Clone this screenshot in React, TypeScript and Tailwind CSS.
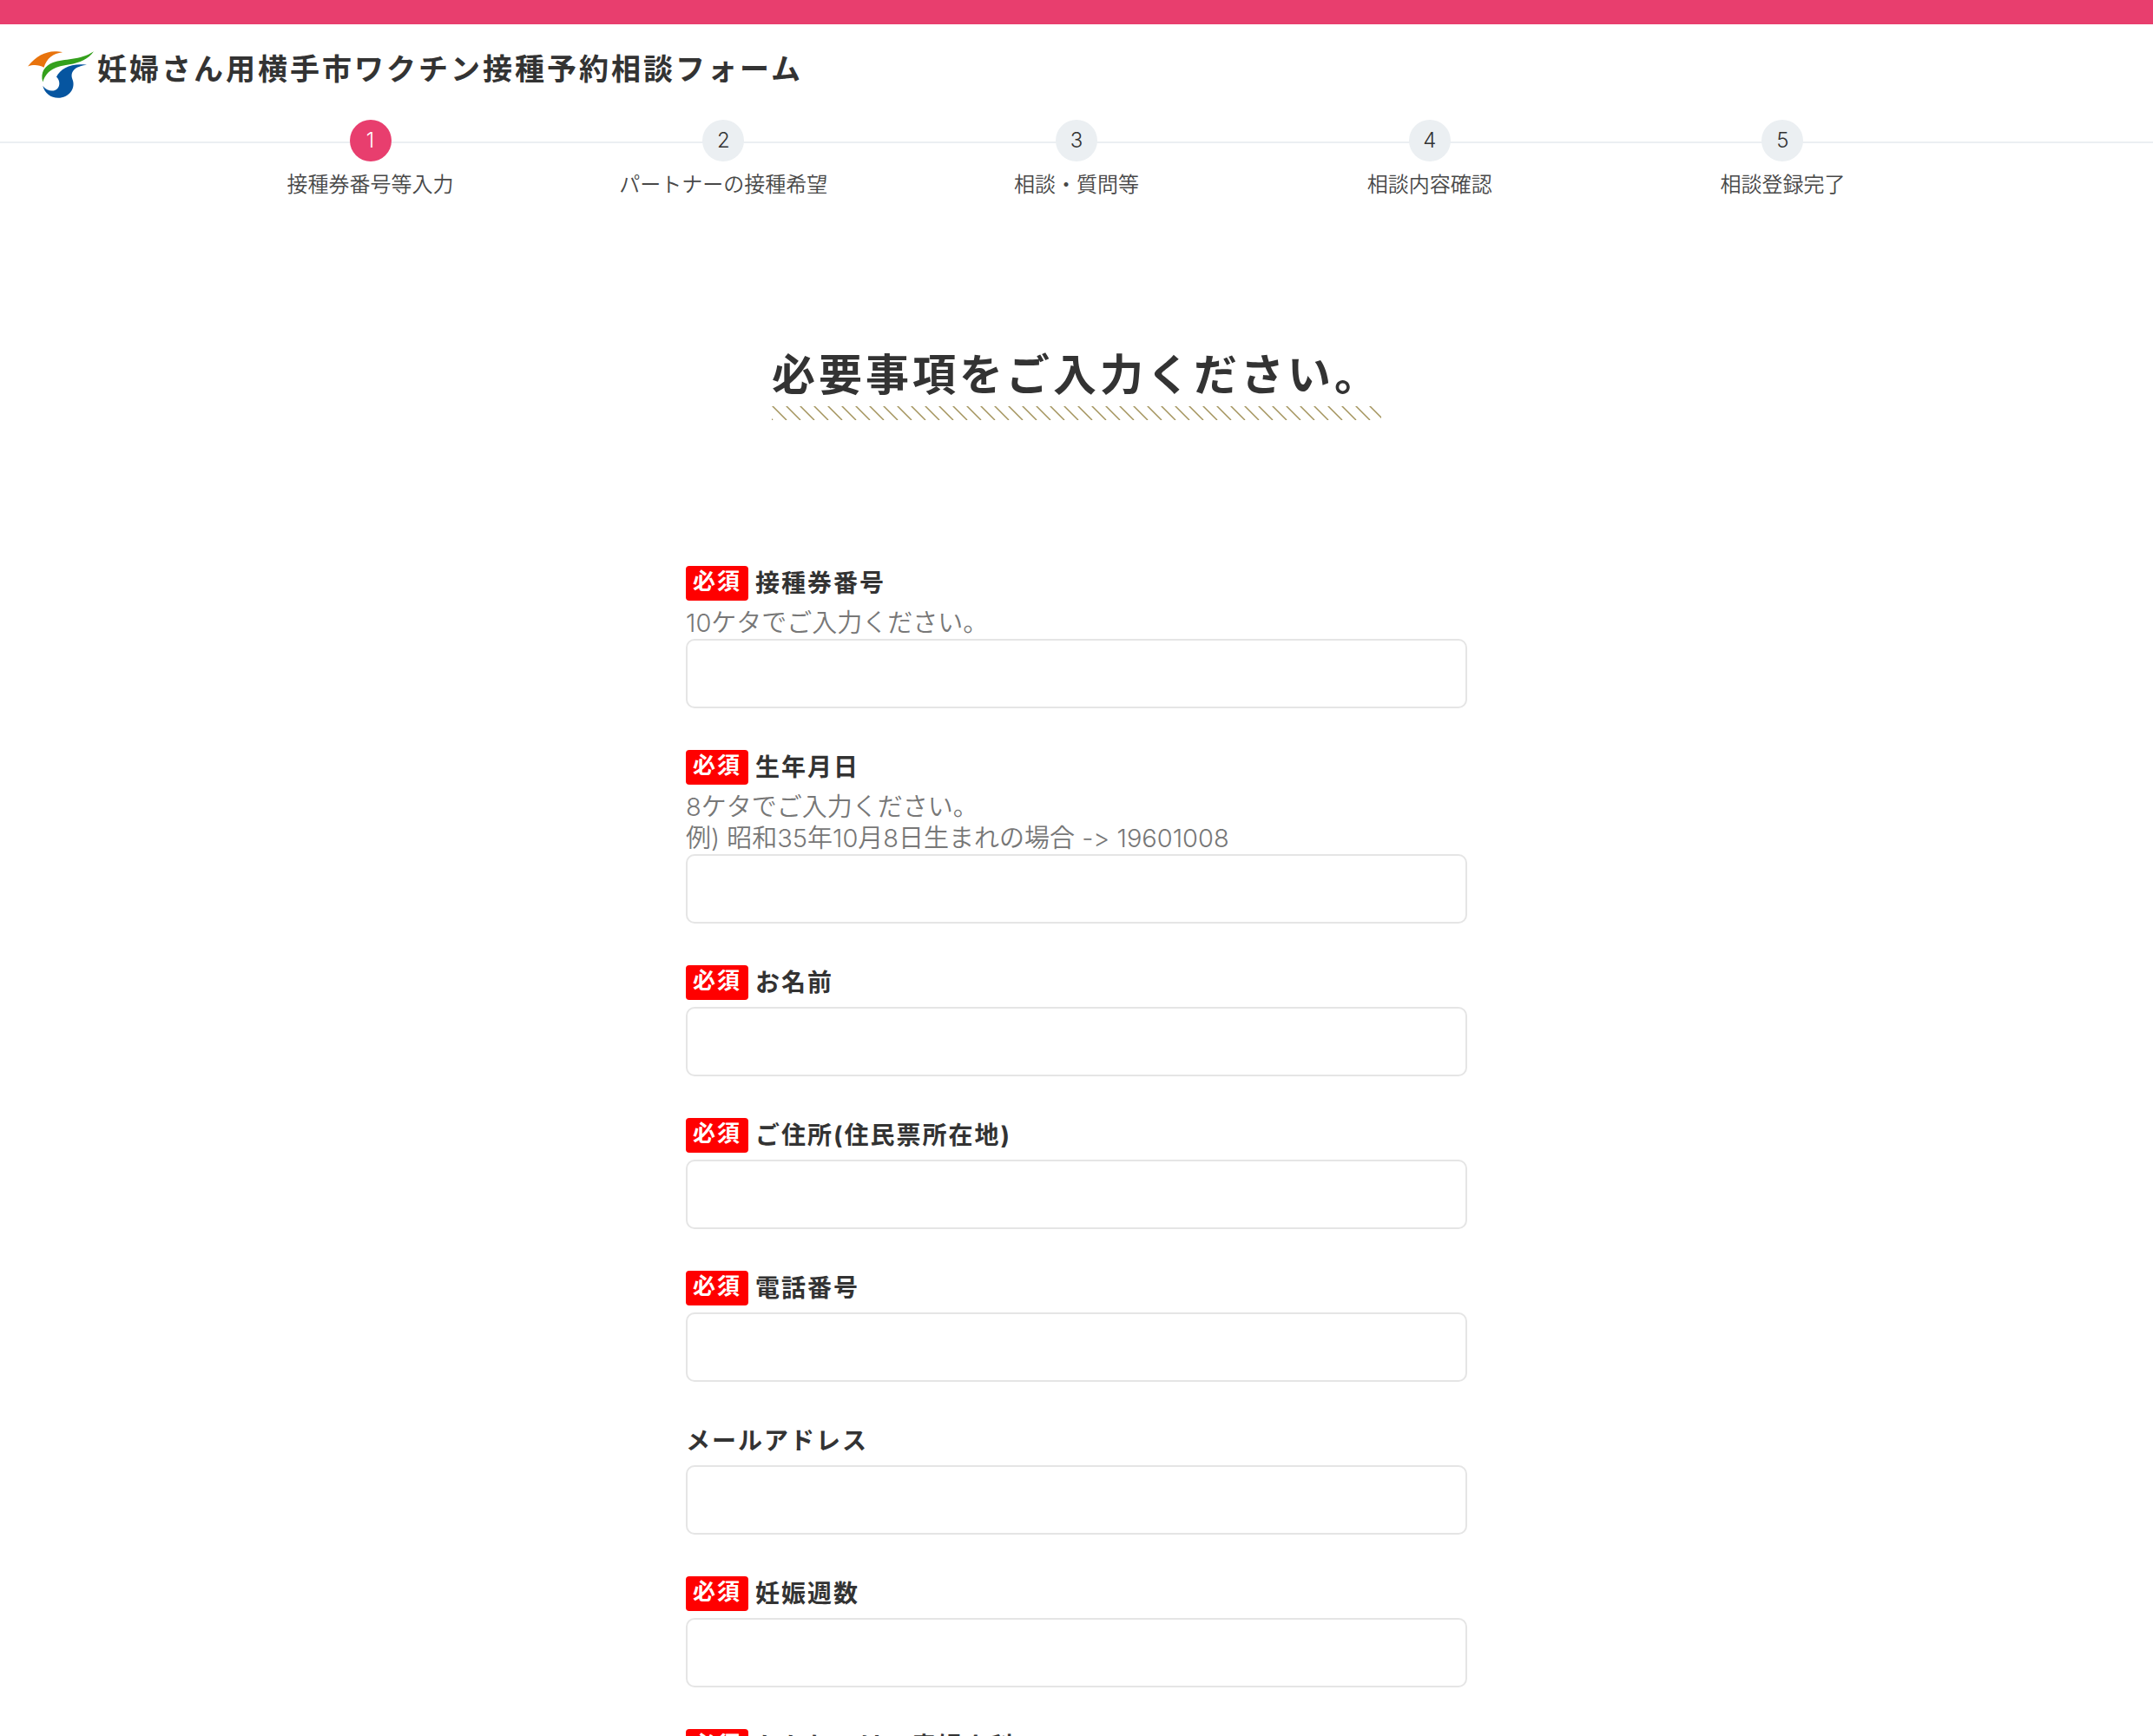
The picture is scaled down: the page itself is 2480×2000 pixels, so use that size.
import React from 'react';

interface Field {
    id: string;
    label: string;
    type: string;
    required: boolean;
    hints: string[];
}

const steps = ['接種券番号等入力', 'パートナーの接種希望', '相談・質問等', '相談内容確認', '相談登録完了'];

const fields: Field[] = [
    { id: 'ticket', label: '接種券番号', type: 'text', required: true, hints: ['10ケタでご入力ください。'] },
    { id: 'birthday', label: '生年月日', type: 'text', required: true, hints: ['8ケタでご入力ください。', '例) 昭和35年10月8日生まれの場合 -> 19601008'] },
    { id: 'name', label: 'お名前', type: 'text', required: true, hints: [] },
    { id: 'address', label: 'ご住所(住民票所在地)', type: 'text', required: true, hints: [] },
    { id: 'tel', label: '電話番号', type: 'tel', required: true, hints: [] },
    { id: 'email', label: 'メールアドレス', type: 'email', required: false, hints: [] },
    { id: 'weeks', label: '妊娠週数', type: 'text', required: true, hints: [] },
    { id: 'clinic', label: 'かかりつけの産婦人科', type: 'text', required: true, hints: [] },
];

const Logo: React.FC = () => (
    <svg viewBox="0 0 76 54" className="w-[76px] h-[54px] shrink-0" aria-hidden="true">
        <path fill="#e8730c" d="M0 17.500C9 6 20 .5 31 .3c3.500 0 7 .2 9 .9C29 2.500 22 8 18.500 18.700 13.500 16 7 15 0 17.500z" />
        <path fill="#34a01c" d="M76 .3C70 9 60 13.500 48 15.200 33 17.400 22 21 17.300 35.500 14 24 20 16.500 29 13 42 8.200 60 11 76 .3z" />
        <path fill="#0655a0" d="M68 15.700C58 17 48 21 51.300 32 56 43 47 53.800 35 53.800 26.500 53.800 19.500 48.500 17.300 40c4 5 9.500 6.500 14 5C38 42.500 37.500 33.500 33 29.500 38 19.500 50 13.500 68 15.700z" />
    </svg>
);

const Steps: React.FC<{ current: number }> = ({ current }) => (
    <div className="relative">
        <div className="absolute inset-x-0 top-[25px] h-[2px] bg-[#ebeff2]" />
        <ol className="relative grid grid-cols-5 w-[82%] mx-auto">
            {steps.map((step, i) => (
                <li key={step} className="flex flex-col items-center text-2xl text-[#484848]">
                    <span
                        className={
                            i + 1 === current
                                ? 'flex items-center justify-center w-12 h-12 rounded-full bg-[#e83e6e] text-white'
                                : 'flex items-center justify-center w-12 h-12 rounded-full bg-[#ebeff2] text-[#333]'
                        }
                    >
                        {i + 1}
                    </span>
                    <span className="mt-2 leading-[38px] whitespace-nowrap">{step}</span>
                </li>
            ))}
        </ol>
    </div>
);

const FormField: React.FC<{ field: Field }> = ({ field }) => (
    <div className="mb-12">
        <label htmlFor={field.id} className="flex items-center h-10 mb-2 text-[28px] leading-10 font-bold tracking-[2px]">
            {field.required && (
                <span className="flex items-center h-10 mr-2 px-2 pb-1 rounded-sm bg-[#f00] text-white text-[26px]">必須</span>
            )}
            {field.label}
        </label>
        {field.hints.map((hint) => (
            <p key={hint} className="text-[29px] leading-9 text-[#777] [font-variant-ligatures:none]">{hint}</p>
        ))}
        <input
            id={field.id}
            name={field.id}
            type={field.type}
            className="block w-full h-20 px-4 border-2 border-[#e5e5e5] rounded-[10px] bg-white text-[28px] outline-none"
        />
    </div>
);

const App: React.FC = () => {
    return (
        <div className="bg-white text-[#333] font-[350] font-[Inter,'Noto_Sans_CJK_JP',sans-serif]">
            <div className="h-7 bg-[#e83e6e]" />

            <header className="flex px-8 pt-[31px] h-[110px]">
                <Logo />
                <h1 className="ml-1 text-[34px] leading-[42px] font-bold tracking-[3px]">妊婦さん用横手市ワクチン接種予約相談フォーム</h1>
            </header>

            <Steps current={1} />

            <main className="flex flex-col items-center pt-[164px] px-8">
                <h2 className="text-[50px] leading-[72px] font-bold tracking-[4px]">必要事項をご入力ください。</h2>
                {/* hatched underline */}
                <svg className="w-[702px] h-4" aria-hidden="true">
                    <defs>
                        <pattern id="hatch" width="16" height="16" patternUnits="userSpaceOnUse">
                            <path d="M0 -1L17 16M-1 14L1 16" stroke="#a3935c" strokeWidth="1.5" />
                        </pattern>
                    </defs>
                    <rect width="100%" height="100%" fill="url(#hatch)" />
                </svg>

                <form className="w-full max-w-[900px] mt-[168px]">
                    {fields.map((field) => (
                        <FormField key={field.id} field={field} />
                    ))}
                </form>
            </main>
        </div>
    );
};

export default App;
